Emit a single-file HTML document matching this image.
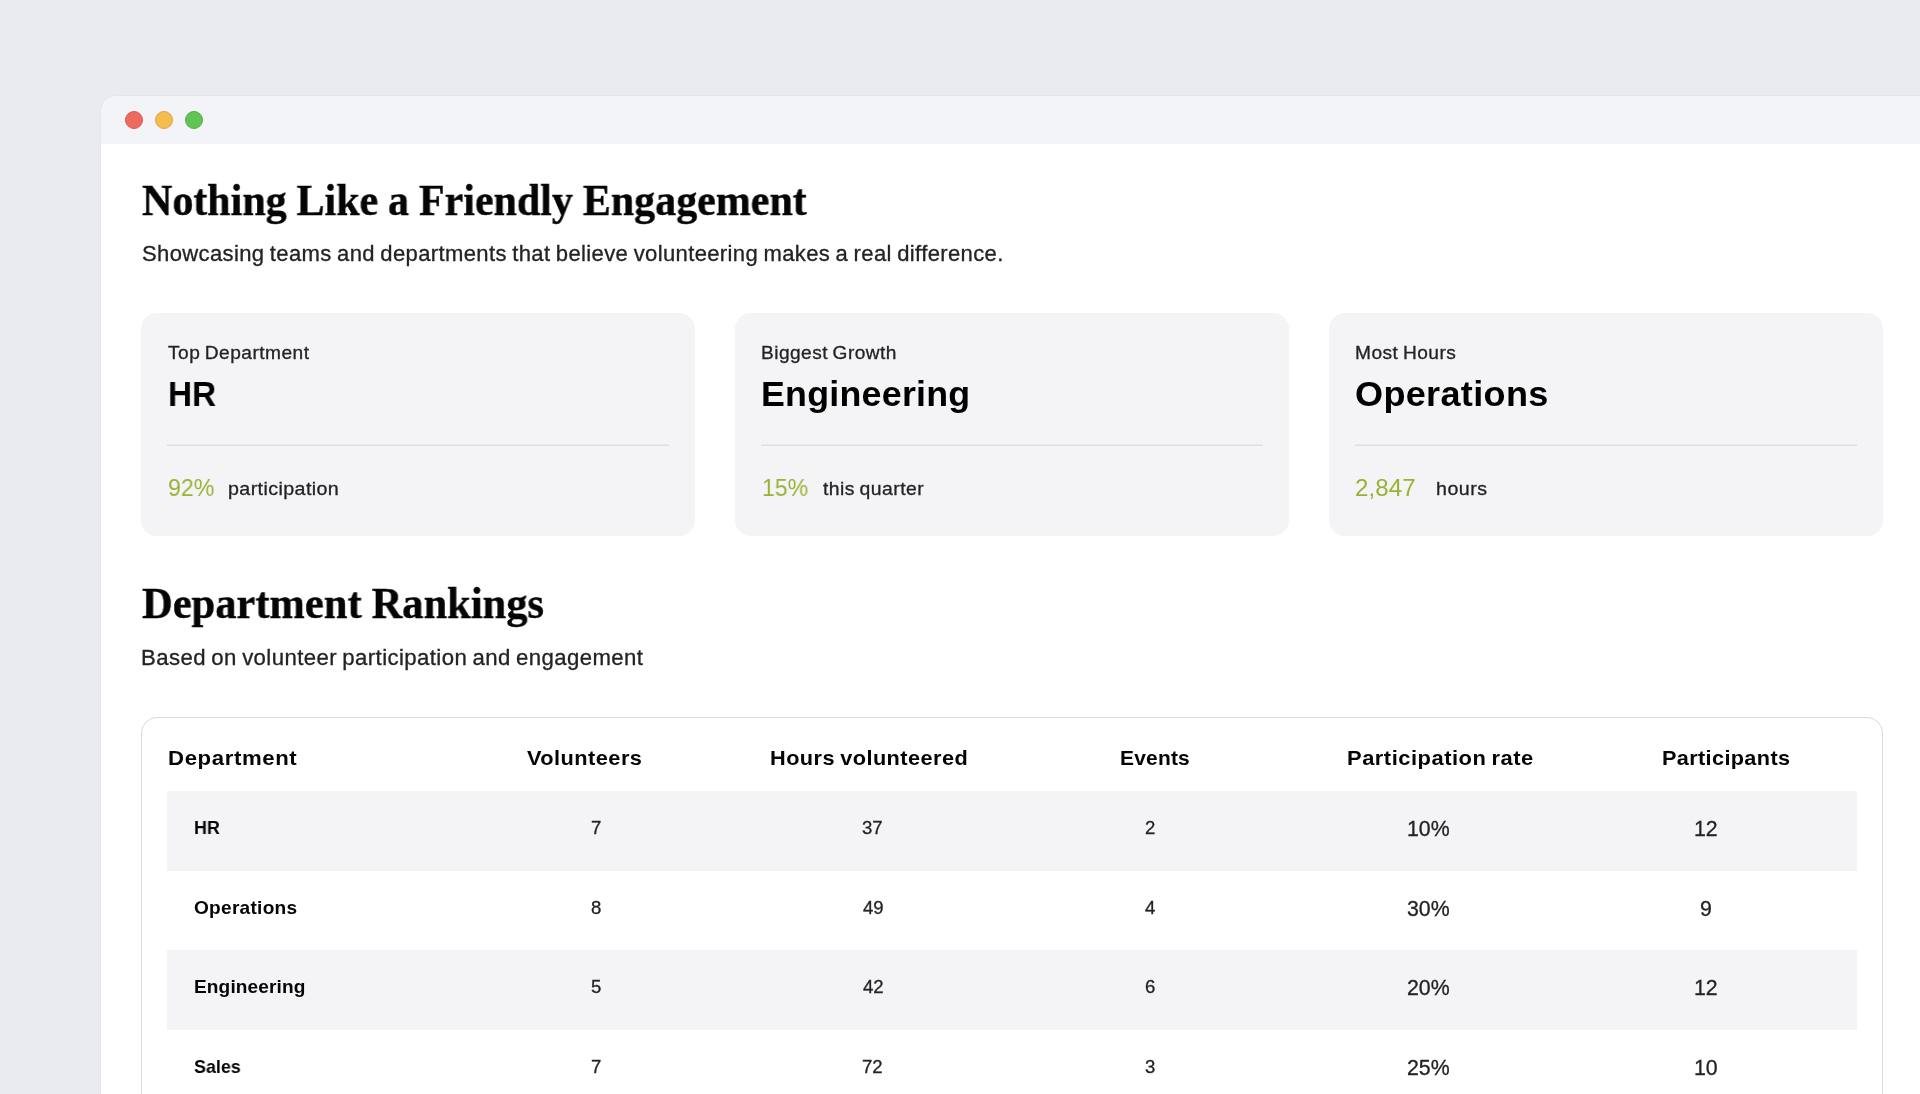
<!DOCTYPE html>
<html lang="en">
<head>
<meta charset="utf-8">
<title>Nothing Like a Friendly Engagement</title>
<style>
*{box-sizing:border-box;margin:0;padding:0}
html,body{width:1920px;height:1094px;overflow:hidden;background:#eaebef}
body{font-family:"Liberation Sans",sans-serif;color:#232325;position:relative}
.t{position:absolute;white-space:nowrap;line-height:1;transform-origin:0 0;will-change:transform;font-weight:400;font-family:"Liberation Sans",sans-serif}
.sf{font-family:"Liberation Serif",serif;-webkit-text-stroke:0.4px currentColor}
.b{font-weight:700}
.k{-webkit-text-stroke:0.3px currentColor}
.win{position:absolute;left:100px;top:95px;width:1900px;height:1100px;background:#fff;border:1px solid #e4e5ea;border-radius:17px 0 0 0;overflow:hidden}
.bar{position:absolute;left:0;top:0;width:100%;height:48px;background:#f3f4f7}
.dot{position:absolute;top:15px;width:18px;height:18px;border-radius:50%}
.d1{left:24px;background:#ee6a5f;border:1px solid #dc5a4f}
.d2{left:54px;background:#f5bd4f;border:1px solid #dfa73c}
.d3{left:84px;background:#61c454;border:1px solid #50b044}
.card{position:absolute;top:217px;width:554px;height:223px;background:#f4f4f6;border-radius:16px}
.card hr{position:absolute;left:26px;right:26px;top:131px;height:2px;border:0;background:linear-gradient(#e9e9eb 0,#e9e9eb 50%,#dfdfe1 50%,#dfdfe1 100%)}
.tbl{position:absolute;left:40px;top:621px;width:1742px;height:420px;border:1px solid #dcdcde;border-radius:16px;background:#fff}
.row{position:absolute;left:25px;width:1690px;height:80px}
.alt{background:#f4f4f6}
</style>
</head>
<body>
<div class="win">
  <div class="bar"><span class="dot d1"></span><span class="dot d2"></span><span class="dot d3"></span></div>
  <main>
    <header>
      <h1 class="t sf b" id="h1" style="left:40.50px;top:83px;font-size:43.8px;color:#050506;word-spacing:-0.581px;transform:scaleX(0.9583)">Nothing Like a Friendly Engagement</h1>
      <p class="t k" id="s1" style="left:40.60px;top:148px;font-size:21.3px;color:#232325;letter-spacing:0.349px;word-spacing:-1.049px;transform:scaleX(1.0350)">Showcasing teams and departments that believe volunteering makes a real difference.</p>
    </header>
    <section class="cards">
      <article class="card" style="left:40px">
        <div class="t k" id="c1l" style="left:27.00px;top:31px;font-size:18.1px;color:#232325;letter-spacing:0.436px;word-spacing:-1.128px;transform:scaleX(1.0581)">Top Department</div>
        <div class="t b" id="c1v" style="left:27.00px;top:63px;font-size:35.3px;color:#000;transform:scaleX(0.9438)">HR</div>
        <hr>
        <span class="t" id="c1n" style="left:27.40px;top:163px;font-size:23.8px;color:#98b233;transform:scaleX(0.9718)">92%</span>
        <span class="t k" id="c1t" style="left:87.40px;top:167px;font-size:18.2px;color:#232325;letter-spacing:0.370px;transform:scaleX(1.0806)">participation</span>
      </article>
      <article class="card" style="left:634px">
        <div class="t k" id="c2l" style="left:26.00px;top:31px;font-size:18.1px;color:#232325;letter-spacing:0.445px;word-spacing:-1.126px;transform:scaleX(1.0556)">Biggest Growth</div>
        <div class="t b" id="c2v" style="left:25.80px;top:63px;font-size:35.3px;color:#000;letter-spacing:0.247px;transform:scaleX(1.0135)">Engineering</div>
        <hr>
        <span class="t" id="c2n" style="left:26.50px;top:163px;font-size:23.8px;color:#98b233;transform:scaleX(0.9670)">15%</span>
        <span class="t k" id="c2t" style="left:88.00px;top:167px;font-size:18.2px;color:#232325;letter-spacing:0.435px;word-spacing:-1.158px;transform:scaleX(1.0646)">this quarter</span>
      </article>
      <article class="card" style="left:1228px">
        <div class="t k" id="c3l" style="left:26.40px;top:31px;font-size:18.1px;color:#232325;letter-spacing:0.431px;word-spacing:-1.122px;transform:scaleX(1.0580)">Most Hours</div>
        <div class="t b" id="c3v" style="left:25.90px;top:63px;font-size:35.3px;color:#000;letter-spacing:0.315px;transform:scaleX(1.0219)">Operations</div>
        <hr>
        <span class="t" id="c3n" style="left:26.40px;top:163px;font-size:23.8px;color:#98b233;letter-spacing:0.099px;transform:scaleX(1.0125)">2,847</span>
        <span class="t k" id="c3t" style="left:107.40px;top:167px;font-size:18.2px;color:#232325;letter-spacing:0.441px;transform:scaleX(1.0777)">hours</span>
      </article>
    </section>
    <section class="rankings">
      <h2 class="t sf b" id="h2" style="left:41.00px;top:486px;font-size:43.8px;color:#050506;word-spacing:-0.730px;transform:scaleX(0.9708)">Department Rankings</h2>
      <p class="t k" id="s2" style="left:39.50px;top:552px;font-size:21.3px;color:#232325;letter-spacing:0.386px;word-spacing:-1.117px;transform:scaleX(1.0410)">Based on volunteer participation and engagement</p>
      <div class="tbl" role="table">
        <div class="thead" role="row">
          <div class="t b" id="th1" role="columnheader" style="left:25.60px;top:30px;font-size:20.6px;color:#050506;letter-spacing:0.567px;transform:scaleX(1.0770)">Department</div>
          <div class="t b" id="th2" role="columnheader" style="left:384.60px;top:30px;font-size:20.6px;color:#050506;letter-spacing:0.420px;transform:scaleX(1.0577)">Volunteers</div>
          <div class="t b" id="th3" role="columnheader" style="left:628.40px;top:30px;font-size:20.6px;color:#050506;letter-spacing:0.421px;word-spacing:-1.191px;transform:scaleX(1.0545)">Hours volunteered</div>
          <div class="t b" id="th4" role="columnheader" style="left:978.00px;top:30px;font-size:20.6px;color:#050506;letter-spacing:0.216px;transform:scaleX(1.0164)">Events</div>
          <div class="t b" id="th5" role="columnheader" style="left:1205.40px;top:30px;font-size:20.6px;color:#050506;letter-spacing:0.470px;word-spacing:-1.288px;transform:scaleX(1.0649)">Participation rate</div>
          <div class="t b" id="th6" role="columnheader" style="left:1520.40px;top:30px;font-size:20.6px;color:#050506;letter-spacing:0.337px;transform:scaleX(1.0528)">Participants</div>
        </div>
        <div class="row alt" role="row" style="top:73px">
          <div class="t b" id="r0d" role="cell" style="left:26.80px;top:28px;font-size:18.6px;color:#050506;transform:scaleX(0.9608)">HR</div>
          <div class="t k" id="r0c0" role="cell" style="left:423.65px;top:28px;font-size:18.6px;color:#232325">7</div>
          <div class="t k" id="r0c1" role="cell" style="left:695.25px;top:28px;font-size:18.6px;color:#232325">37</div>
          <div class="t k" id="r0c2" role="cell" style="left:978.25px;top:28px;font-size:18.6px;color:#232325">2</div>
          <div class="t k" id="r0c3" role="cell" style="left:1239.90px;top:28px;font-size:21.3px;color:#232325">10%</div>
          <div class="t k" id="r0c4" role="cell" style="left:1526.80px;top:28px;font-size:21.3px;color:#232325">12</div>
        </div>
        <div class="row" role="row" style="top:152px">
          <div class="t b" id="r1d" role="cell" style="left:26.80px;top:29px;font-size:18.6px;color:#050506;letter-spacing:0.260px;transform:scaleX(1.0260)">Operations</div>
          <div class="t k" id="r1c0" role="cell" style="left:423.65px;top:29px;font-size:18.6px;color:#232325">8</div>
          <div class="t k" id="r1c1" role="cell" style="left:696.00px;top:29px;font-size:18.6px;color:#232325">49</div>
          <div class="t k" id="r1c2" role="cell" style="left:978.00px;top:29px;font-size:18.6px;color:#232325">4</div>
          <div class="t k" id="r1c3" role="cell" style="left:1239.90px;top:29px;font-size:21.3px;color:#232325">30%</div>
          <div class="t k" id="r1c4" role="cell" style="left:1532.80px;top:29px;font-size:21.3px;color:#232325">9</div>
        </div>
        <div class="row alt" role="row" style="top:232px">
          <div class="t b" id="r2d" role="cell" style="left:26.80px;top:28px;font-size:18.6px;color:#050506;letter-spacing:0.127px;transform:scaleX(1.0251)">Engineering</div>
          <div class="t k" id="r2c0" role="cell" style="left:423.65px;top:28px;font-size:18.6px;color:#232325">5</div>
          <div class="t k" id="r2c1" role="cell" style="left:696.00px;top:28px;font-size:18.6px;color:#232325">42</div>
          <div class="t k" id="r2c2" role="cell" style="left:978.25px;top:28px;font-size:18.6px;color:#232325">6</div>
          <div class="t k" id="r2c3" role="cell" style="left:1239.90px;top:28px;font-size:21.3px;color:#232325">20%</div>
          <div class="t k" id="r2c4" role="cell" style="left:1526.80px;top:28px;font-size:21.3px;color:#232325">12</div>
        </div>
        <div class="row" role="row" style="top:312px">
          <div class="t b" id="r3d" role="cell" style="left:26.80px;top:28px;font-size:18.6px;color:#050506;transform:scaleX(0.9618)">Sales</div>
          <div class="t k" id="r3c0" role="cell" style="left:423.65px;top:28px;font-size:18.6px;color:#232325">7</div>
          <div class="t k" id="r3c1" role="cell" style="left:695.25px;top:28px;font-size:18.6px;color:#232325">72</div>
          <div class="t k" id="r3c2" role="cell" style="left:978.25px;top:28px;font-size:18.6px;color:#232325">3</div>
          <div class="t k" id="r3c3" role="cell" style="left:1239.90px;top:28px;font-size:21.3px;color:#232325">25%</div>
          <div class="t k" id="r3c4" role="cell" style="left:1526.80px;top:28px;font-size:21.3px;color:#232325">10</div>
        </div>
      </div>
    </section>
  </main>
</div>
</body>
</html>
